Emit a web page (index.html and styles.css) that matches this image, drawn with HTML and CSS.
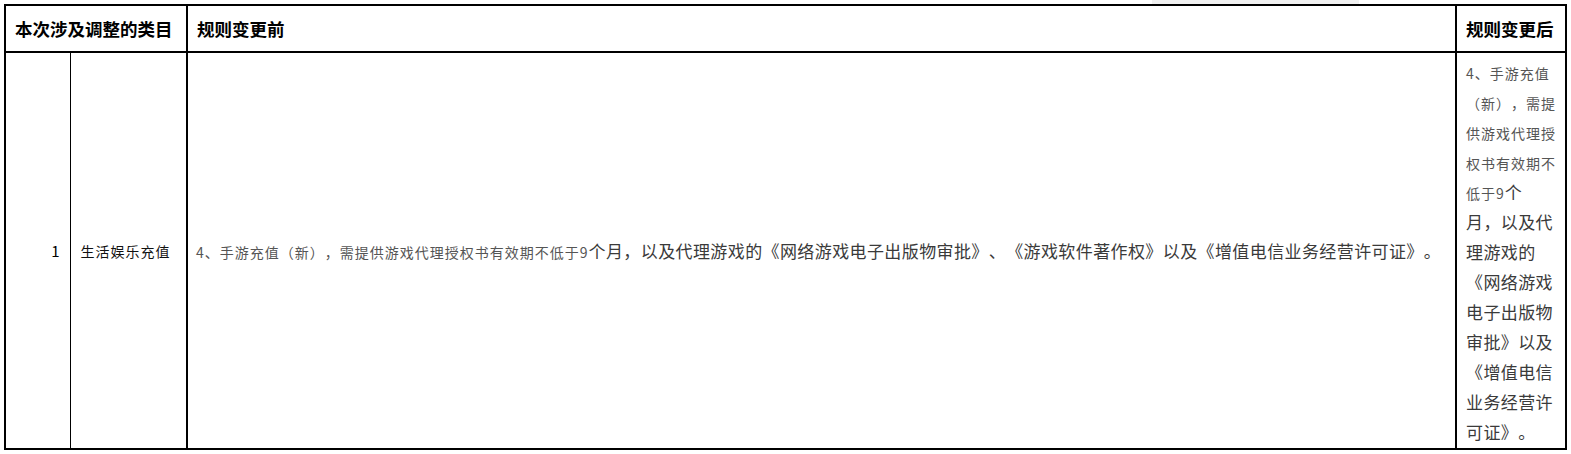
FILE: index.html
```html
<!DOCTYPE html>
<html lang="zh-CN">
<head>
<meta charset="utf-8">
<title>规则变更</title>
<link rel="stylesheet" href="styles.css">
</head>
<body>
<div class="topbar"></div>
<table class="rules">
  <colgroup>
    <col class="c-num">
    <col class="c-cat">
    <col class="c-before">
    <col class="c-after">
  </colgroup>
  <thead>
    <tr>
      <th colspan="2">本次涉及调整的类目</th>
      <th>规则变更前</th>
      <th>规则变更后</th>
    </tr>
  </thead>
  <tbody>
    <tr>
      <td class="num">1</td>
      <td class="cat">生活娱乐充值</td>
      <td class="before"><span class="sm">4、手游充值（新），需提供游戏代理授权书有效期不低于9</span><span class="lg">个月，以及代理游戏的《网络游戏电子出版物审批》、《游戏软件著作权》以及《增值电信业务经营许可证》。</span></td>
      <td class="after"><span class="sm">4、手游充值（新），需提供游戏代理授权书有效期不低于9</span><span class="lg">个<br>月，以及代理游戏的《网络游戏电子出版物审批》以及《增值电信业务经营许可证》。</span></td>
    </tr>
  </tbody>
</table>
</body>
</html>
```

FILE: styles.css
```css
html, body {
  margin: 0;
  padding: 0;
  background: #fff;
}
body {
  font-family: "Noto Sans CJK SC", "Noto Sans", sans-serif;
  color: #000;
  text-spacing-trim: space-all;
}
.topbar {
  width: 207px;
  height: 4px;
  margin-left: 1152px;
  background: #f0f0f0;
}
.rules {
  margin-left: 4px;
  border-collapse: collapse;
  table-layout: fixed;
  width: 1561px;
}
.c-num { width: 65px; }
.c-cat { width: 117px; }
.c-before { width: 1269px; }
.c-after { width: 110px; }

.rules th,
.rules td {
  border: 2px solid #000;
  vertical-align: middle;
}
.rules th {
  height: 45px;
  padding: 0 0 0 9px;
  text-align: left;
  font-size: 17.5px;
  font-weight: bold;
  line-height: 1;
}
.rules td {
  padding: 0;
}
.rules td.num {
  border-right-width: 1px;
  text-align: right;
  padding-right: 10px;
  font-size: 15px;
}
.rules td.cat {
  border-left-width: 1px;
  padding-left: 10px;
  font-size: 14px;
  letter-spacing: 1px;
  color: #111;
}
.rules td.before {
  padding-left: 8px;
  color: #555;
  white-space: nowrap;
}
.rules td.after {
  padding: 4px 5px 1px 9px;
  font-size: 16px;
  line-height: 30px;
  color: #555;
  vertical-align: top;
}
.rules td.after span {
  line-height: 18px;
}
.sm {
  font-size: 14px;
  letter-spacing: 1px;
}
.lg {
  font-size: 17px;
  letter-spacing: 0.4px;
  color: #3a3a3a;
}
```
